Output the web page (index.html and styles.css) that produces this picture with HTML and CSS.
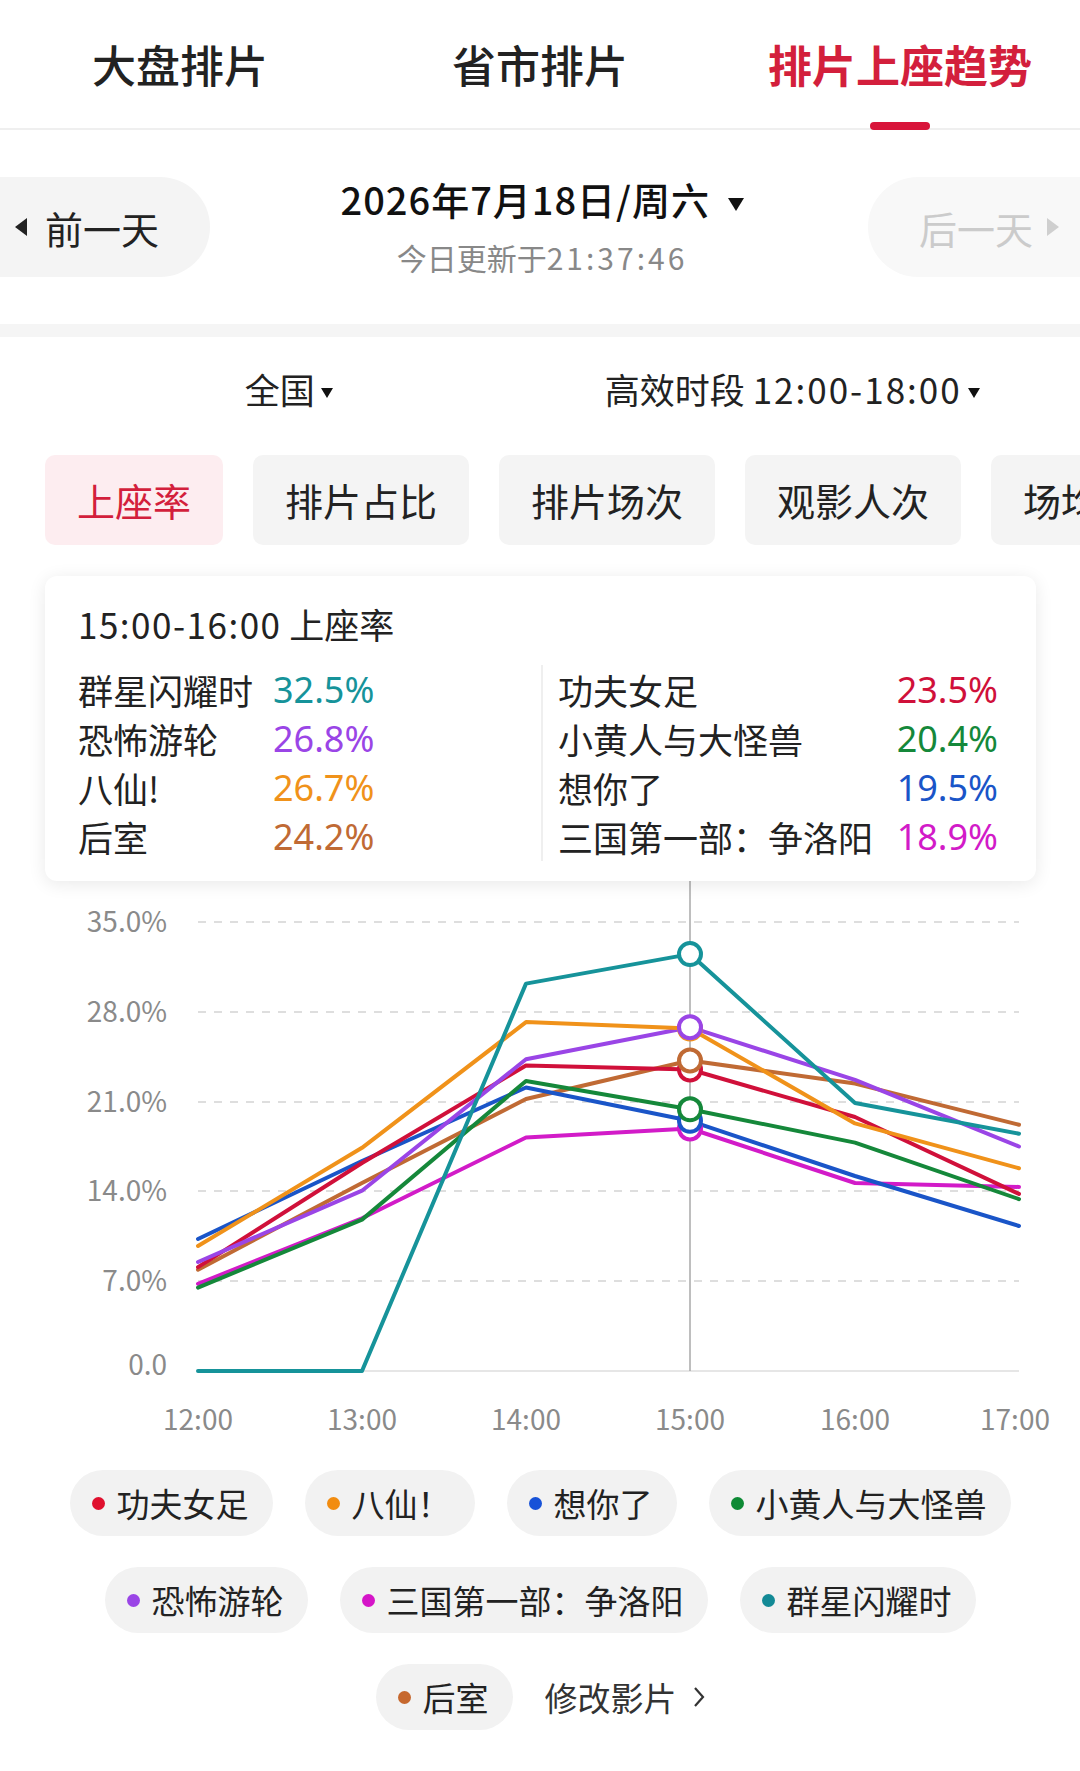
FILE: index.html
```html
<!DOCTYPE html>
<html lang="zh-CN">
<head>
    <meta charset="UTF-8">
    <meta name="viewport" content="width=device-width, initial-scale=1.0">
    <title>排片上座趋势</title>
    <link rel="stylesheet" href="styles.css">
</head>
<body>
    <div class="tabs">
        <div class="tab">大盘排片</div>
        <div class="tab">省市排片</div>
        <div class="tab active">排片上座趋势</div>
    </div>

    <div class="day-bar">
        <div class="day-btn prev">
            <svg width="12" height="18" viewBox="0 0 12 18"><polygon points="12,0 12,18 0,9" fill="#222"/></svg>
            <span>前一天</span>
        </div>
        <div class="day-info">
            <div class="day-date">2026年7月18日/周六
                <svg class="caret-big" width="16" height="13" viewBox="0 0 16 13"><polygon points="0,0 16,0 8,13" fill="#111"/></svg>
            </div>
            <div class="day-update">今日更新于<span class="time">21:37:46</span></div>
        </div>
        <div class="day-btn next">
            <span>后一天</span>
            <svg width="12" height="18" viewBox="0 0 12 18"><polygon points="0,0 0,18 12,9" fill="#cfcfcf"/></svg>
        </div>
    </div>

    <div class="band"></div>

    <div class="filters">
        <div class="filter">全国<svg class="caret" width="12" height="10" viewBox="0 0 12 10"><polygon points="0,0 12,0 6,10" fill="#111"/></svg></div>
        <div class="filter">高效时段 <span class="num">12:00-18:00</span><svg class="caret" width="12" height="10" viewBox="0 0 12 10"><polygon points="0,0 12,0 6,10" fill="#111"/></svg></div>
    </div>

    <div class="metrics">
        <div class="metric active">上座率</div>
        <div class="metric">排片占比</div>
        <div class="metric">排片场次</div>
        <div class="metric">观影人次</div>
        <div class="metric">场均人次</div>
    </div>

    <div class="tip-card">
        <div class="tip-title"><span class="num">15:00-16:00</span> 上座率</div>
        <div class="tip-grid">
            <div class="tip-col left">
                <div class="tip-row"><span class="name">群星闪耀时</span><span class="val c-teal">32.5%</span></div>
                <div class="tip-row"><span class="name">恐怖游轮</span><span class="val c-purple">26.8%</span></div>
                <div class="tip-row"><span class="name">八仙!</span><span class="val c-orange">26.7%</span></div>
                <div class="tip-row"><span class="name">后室</span><span class="val c-brown">24.2%</span></div>
            </div>
            <div class="tip-col right">
                <div class="tip-row"><span class="name">功夫女足</span><span class="val c-red">23.5%</span></div>
                <div class="tip-row"><span class="name">小黄人与大怪兽</span><span class="val c-green">20.4%</span></div>
                <div class="tip-row"><span class="name">想你了</span><span class="val c-blue">19.5%</span></div>
                <div class="tip-row"><span class="name">三国第一部：争洛阳</span><span class="val c-magenta">18.9%</span></div>
            </div>
        </div>
    </div>

    <svg class="chart" width="1080" height="560" viewBox="0 0 1080 560">
        <!-- grid -->
        <g stroke="#dedede" stroke-width="2" stroke-dasharray="8 8">
            <line x1="198" y1="41" x2="1019" y2="41"/>
            <line x1="198" y1="131" x2="1019" y2="131"/>
            <line x1="198" y1="221" x2="1019" y2="221"/>
            <line x1="198" y1="310" x2="1019" y2="310"/>
            <line x1="198" y1="400" x2="1019" y2="400"/>
        </g>
        <line x1="198" y1="490" x2="1019" y2="490" stroke="#e6e6e6" stroke-width="2"/>
        <line x1="690" y1="0" x2="690" y2="490" stroke="#a8a8a8" stroke-width="1.5"/>

        <g class="axis" text-anchor="end">
            <text x="167" y="51">35.0%</text>
            <text x="167" y="141">28.0%</text>
            <text x="167" y="231">21.0%</text>
            <text x="167" y="320">14.0%</text>
            <text x="167" y="410">7.0%</text>
            <text x="167" y="494">0.0</text>
        </g>
        <g class="axis" text-anchor="middle">
            <text x="198" y="549">12:00</text>
            <text x="362" y="549">13:00</text>
            <text x="526" y="549">14:00</text>
            <text x="690" y="549">15:00</text>
            <text x="855" y="549">16:00</text>
            <text x="1015" y="549">17:00</text>
        </g>

        <!-- series -->
        <g fill="none" stroke-width="4" stroke-linejoin="round" stroke-linecap="round">
            <polyline stroke="#c06a34" points="198,388.7 362,302 526,218 690,179.5 855,202.6 1019,243.7"/>
            <polyline stroke="#d21bc8" points="198,402.8 362,337.3 526,256.5 690,247.5 855,302 1019,305.9"/>
            <polyline stroke="#1a55c8" points="198,358 362,280 526,206.5 690,239.8 855,295 1019,345"/>
            <polyline stroke="#15883a" points="198,406.6 362,338.6 526,200 690,228.3 855,261.6 1019,318.1"/>
            <polyline stroke="#d0103a" points="198,386.1 362,282 526,184.5 690,188.5 855,236 1019,312.9"/>
            <polyline stroke="#9a45e6" points="198,381 362,309.7 526,178.3 690,146.2 855,198.8 1019,265.5"/>
            <polyline stroke="#f0921a" points="198,365 362,266.8 526,141.1 690,147.5 855,242.4 1019,287.3"/>
            <polyline stroke="#16939a" points="198,490 362,490 526,102.6 690,73.1 855,222 1019,252.7"/>
        </g>
        <g fill="#fff" stroke-width="4">
            <circle cx="690" cy="247.5" r="11" stroke="#d21bc8"/>
            <circle cx="690" cy="239.8" r="11" stroke="#1a55c8"/>
            <circle cx="690" cy="228.3" r="11" stroke="#15883a"/>
            <circle cx="690" cy="188.5" r="11" stroke="#d0103a"/>
            <circle cx="690" cy="179.5" r="11" stroke="#c06a34"/>
            <circle cx="690" cy="147.5" r="11" stroke="#f0921a"/>
            <circle cx="690" cy="146.2" r="11" stroke="#9a45e6"/>
            <circle cx="690" cy="73.1" r="11" stroke="#16939a"/>
        </g>
    </svg>

    <div class="legend">
        <div class="legend-item"><span class="dot bg-red"></span>功夫女足</div>
        <div class="legend-item"><span class="dot bg-orange"></span>八仙！</div>
        <div class="legend-item"><span class="dot bg-blue"></span>想你了</div>
        <div class="legend-item"><span class="dot bg-green"></span>小黄人与大怪兽</div>
        <div class="legend-item"><span class="dot bg-purple"></span>恐怖游轮</div>
        <div class="legend-item"><span class="dot bg-magenta"></span>三国第一部：争洛阳</div>
        <div class="legend-item"><span class="dot bg-teal"></span>群星闪耀时</div>
        <div class="legend-item"><span class="dot bg-brown"></span>后室</div>
        <div class="edit-link">修改影片
            <svg width="12" height="22" viewBox="0 0 12 22"><polyline points="2,2 10,11 2,20" fill="none" stroke="#333" stroke-width="2.2"/></svg>
        </div>
    </div>
</body>
</html>
```

FILE: styles.css
```css
body {
    margin: 0;
    width: 1080px;
    background: #fff;
    color: #222;
    font-family: "Noto Sans CJK SC", "Noto Sans", sans-serif;
    overflow: hidden;
}

/* top tabs */
.tabs {
    display: flex;
    height: 128px;
    border-bottom: 2px solid #efefef;
}
.tab {
    flex: 1;
    position: relative;
    display: flex;
    align-items: center;
    justify-content: center;
    font-size: 44px;
    font-weight: 500;
    color: #222;
}
.tab.active {
    color: #d31f3c;
    font-weight: 700;
}
.tab.active::after {
    content: "";
    position: absolute;
    left: 50%;
    bottom: -2px;
    width: 60px;
    height: 8px;
    margin-left: -30px;
    border-radius: 4px;
    background: #d8143a;
}

/* day switcher */
.day-bar {
    display: flex;
    align-items: center;
    justify-content: space-between;
    height: 194px;
}
.day-btn {
    display: flex;
    align-items: center;
    height: 100px;
    font-size: 38px;
}
.day-btn.prev {
    width: 210px;
    box-sizing: border-box;
    padding-left: 15px;
    gap: 18px;
    background: #f4f4f4;
    border-radius: 0 50px 50px 0;
}
.day-btn.next {
    width: 212px;
    box-sizing: border-box;
    padding-left: 51px;
    gap: 14px;
    color: #cbcbcb;
    background: #f8f8f8;
    border-radius: 50px 0 0 50px;
}
.day-info {
    text-align: center;
    margin-left: 6px;
}
.day-date {
    font-size: 38px;
    line-height: 44px;
    font-weight: 500;
    letter-spacing: 1px;
    color: #111;
}
.caret-big {
    margin-left: 8px;
    vertical-align: 4px;
}
.day-update {
    margin-top: 16px;
    font-size: 30px;
    line-height: 40px;
    color: #888;
}
.day-update .time {
    letter-spacing: 3px;
}

.band {
    height: 13px;
    background: #f5f5f5;
}

/* filters */
.filters {
    display: grid;
    grid-template-columns: 1fr 1fr;
    height: 102px;
    padding: 0 36px 0 37px;
    align-items: center;
    justify-items: center;
}
.filter {
    font-size: 35px;
    color: #222;
}
.filter .num {
    letter-spacing: 2px;
}
.caret {
    margin-left: 6px;
    vertical-align: 6px;
}

/* metric chips */
.metrics {
    display: flex;
    gap: 30px;
    margin-top: 16px;
    padding-left: 45px;
    overflow: hidden;
    white-space: nowrap;
}
.metric {
    flex: none;
    height: 90px;
    line-height: 90px;
    padding: 0 32px;
    font-size: 38px;
    background: #f4f4f4;
    border-radius: 10px;
}
.metric.active {
    color: #d31f3c;
    background: #fdedf0;
}

/* tooltip card */
.tip-card {
    width: 991px;
    margin: 31px 0 0 45px;
    box-sizing: border-box;
    padding: 28px 38px 20px 33px;
    background: #fff;
    border-radius: 12px;
    box-shadow: 0 3px 18px rgba(0, 0, 0, 0.09);
    position: relative;
    z-index: 1;
}
.tip-title {
    font-size: 35px;
    line-height: 40px;
}
.tip-title .num {
    letter-spacing: 1.5px;
}
.tip-grid {
    display: grid;
    grid-template-columns: 463px 1fr;
    margin-top: 21px;
}
.tip-col.right {
    border-left: 2px solid #efefef;
    padding-left: 15px;
}
.tip-row {
    display: flex;
    height: 49px;
    align-items: center;
    font-size: 35px;
}
.tip-col.left .name {
    width: 195px;
}
.tip-col.right .name {
    flex: 1;
}
.val {
    font-family: "Noto Sans", "Open Sans", sans-serif;
    font-size: 36px;
}

.c-teal { color: #16939a; }
.c-purple { color: #9a45e6; }
.c-orange { color: #f0921a; }
.c-brown { color: #c06a34; }
.c-red { color: #d0103a; }
.c-green { color: #15883a; }
.c-blue { color: #1a55c8; }
.c-magenta { color: #d21bc8; }

/* chart */
.chart {
    display: block;
}
.axis text {
    font-family: "Noto Sans CJK SC", sans-serif;
    font-size: 28px;
    fill: #8a8a8a;
}

/* legend */
.legend {
    display: flex;
    flex-wrap: wrap;
    justify-content: center;
    gap: 31px 32px;
    margin-top: 29px;
    padding: 0 50px;
}
.legend-item {
    display: flex;
    align-items: center;
    height: 66px;
    padding: 0 24px 0 22px;
    font-size: 33px;
    background: #f2f2f2;
    border-radius: 33px;
}
.dot {
    width: 13px;
    height: 13px;
    margin-right: 12px;
    border-radius: 50%;
}
.bg-red { background: #e0102e; }
.bg-orange { background: #f28c10; }
.bg-blue { background: #1752d8; }
.bg-green { background: #0e8a35; }
.bg-purple { background: #9a45e6; }
.bg-magenta { background: #d515c8; }
.bg-teal { background: #138a96; }
.bg-brown { background: #c6682e; }

.edit-link {
    display: flex;
    align-items: center;
    gap: 16px;
    height: 66px;
    font-size: 33px;
    color: #333;
}
```
